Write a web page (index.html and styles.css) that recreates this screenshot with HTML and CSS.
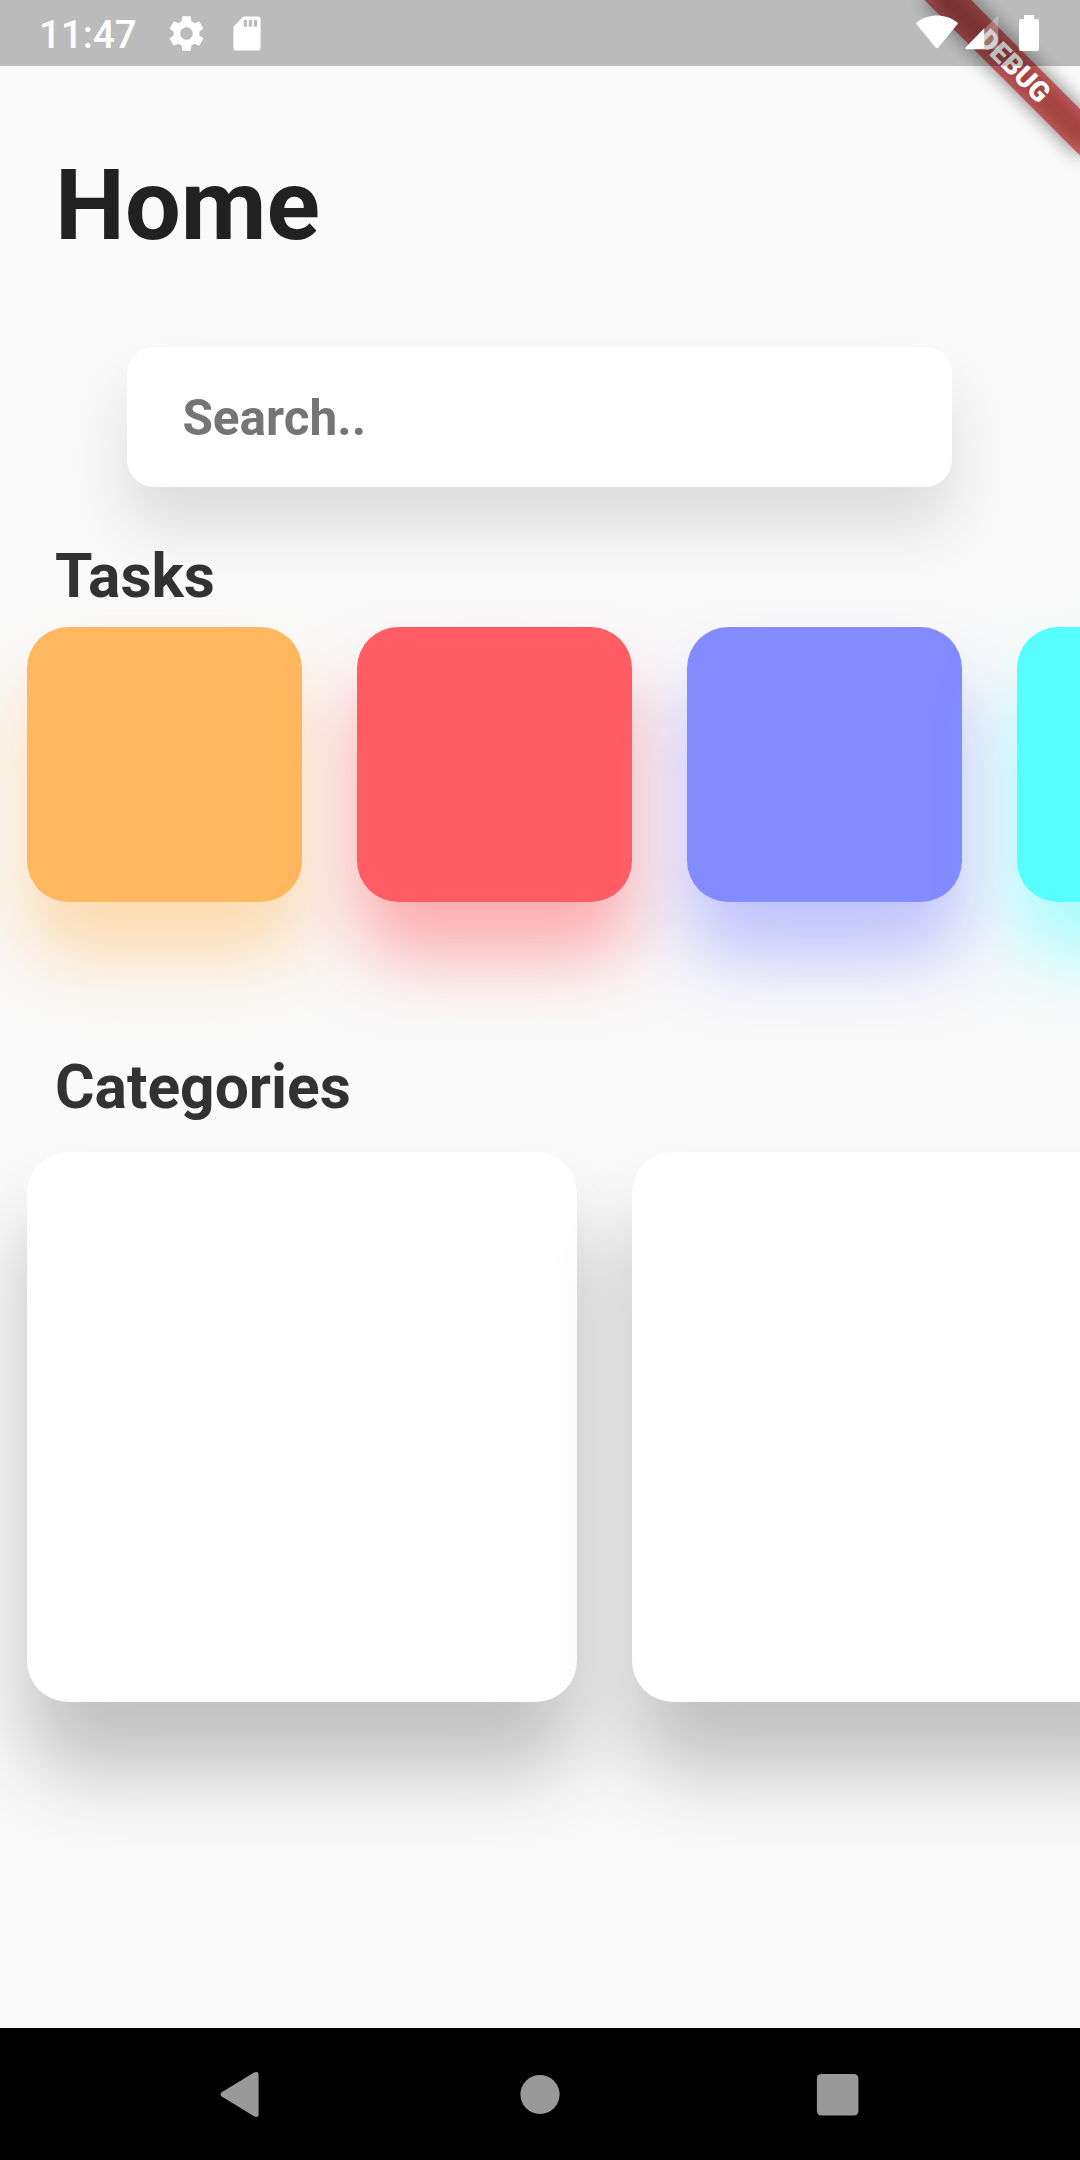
FILE: index.html
```html
<!DOCTYPE html>
<html lang="en">
<head>
<meta charset="utf-8">
<title>Home</title>
<link rel="stylesheet" href="styles.css">
</head>
<body>
<div class="screen">
  <div class="banner">
    <div class="banner-shadow"></div>
    <div class="banner-strip">DEBUG</div>
  </div>
  <header class="status-bar">
    <span class="clock">11:47</span>
    <svg class="gear" viewBox="0 0 24 24"><path fill="#fff" fill-rule="evenodd" d="M19.14 12.94c.04-.3.06-.61.06-.94 0-.32-.02-.64-.07-.94l2.03-1.58c.18-.14.23-.41.12-.61l-1.92-3.32c-.12-.22-.37-.29-.59-.22l-2.39.96c-.5-.38-1.03-.7-1.62-.94L14.4 2.81c-.04-.24-.24-.41-.48-.41h-3.84c-.24 0-.43.17-.47.41L9.25 5.35C8.66 5.59 8.12 5.92 7.63 6.29L5.24 5.33c-.22-.08-.47 0-.59.22L2.74 8.87c-.12.21-.08.47.12.61l2.03 1.58c-.05.3-.09.63-.09.94s.02.64.07.94l-2.03 1.58c-.18.14-.23.41-.12.61l1.92 3.32c.12.22.37.29.59.22l2.39-.96c.5.38 1.03.7 1.62.94l.36 2.54c.05.24.24.41.48.41h3.84c.24 0 .44-.17.47-.41l.36-2.54c.59-.24 1.13-.56 1.62-.94l2.39.96c.22.08.47 0 .59-.22l1.92-3.32c.12-.22.07-.47-.12-.61zM12 15.5a3.5 3.5 0 1 1 0-7 3.5 3.5 0 0 1 0 7z"/></svg>
    <svg class="sd" viewBox="0 0 28 35"><path fill="#fff" fill-rule="evenodd" d="M10.400 .4H24.500Q27.600 .4 27.600 3.500V31.500Q27.600 34.600 24.500 34.600H3.500Q.4 34.600 .4 31.500V10.700ZM10.700 4V10.700H14V4ZM15.800 4V10.700H19V4ZM20.900 4V10.700H24.200V4Z"/></svg>
    <span class="spacer"></span>
    <svg class="wifi" viewBox="0 0 42 34"><path fill="#fff" d="M.6 9.300Q-.3 8.100 1 7.200C7 2.500 14 .4 21 .4S35 2.500 41 7.200Q42.300 8.100 41.400 9.300L22.500 32.300Q21 34 19.500 32.300Z"/></svg>
    <svg class="signal" viewBox="0 0 34 34"><path fill="#fff" fill-opacity=".3" d="M19.300 13.300L31 1.200Q33.300-.4 33.300 2V31Q33.300 33.300 31 33.300H19.300Z"/><path fill="#fff" d="M19.300 12.300V33.300H1.500Q-.5 33 .8 31.200Z"/></svg>
    <svg class="battery" viewBox="0 0 20 36"><path fill="#fff" d="M5 0H15V4H18Q20 4 20 6V34Q20 36 18 36H2Q0 36 0 34V6Q0 4 2 4H5Z"/></svg>
  </header>
  <main class="content">
    <h1 class="title">Home</h1>
    <div class="search">Search..</div>
    <h2 class="heading heading-tasks">Tasks</h2>
    <div class="row">
      <div class="task task-orange"></div>
      <div class="task task-red"></div>
      <div class="task task-indigo"></div>
      <div class="task task-cyan"></div>
    </div>
    <h2 class="heading heading-categories">Categories</h2>
    <div class="row">
      <div class="category"></div>
      <div class="category"></div>
    </div>
  </main>
  <nav class="nav-bar">
    <svg class="nav-icon" viewBox="0 0 48 48"><path fill="#999" d="M5.700 22.200Q3.500 24.500 5.700 26.600L38 46.300Q42.600 48.300 42.600 44V5Q42.600 .5 38 2.500Z"/></svg>
    <svg class="nav-icon" viewBox="0 0 48 48"><circle cx="25" cy="24.500" r="19.600" fill="#999"/></svg>
    <svg class="nav-icon" viewBox="0 0 48 48"><rect x="2.900" y="4" width="41.500" height="41.500" rx="4.500" fill="#999"/></svg>
  </nav>
</div>
</body>
</html>
```
FILE: styles.css
```css
body {
  margin: 0;
  font-family: Roboto, "Liberation Sans", sans-serif;
}

.screen {
  position: relative;
  display: flex;
  flex-direction: column;
  width: 1080px;
  height: 2160px;
  overflow: hidden;
  background: #fafafa;
}

.status-bar {
  position: relative;
  display: flex;
  align-items: center;
  flex: none;
  box-sizing: border-box;
  height: 66px;
  padding: 0 41px 0 39px;
  background: rgba(0, 0, 0, 0.25);
}

.clock {
  width: 126px;
  font-size: 38.5px;
  font-weight: 500;
  line-height: 46px;
  padding-top: 3px;
  color: #fff;
}

.gear {
  width: 43px;
  height: 43px;
}

.sd {
  width: 28px;
  height: 35px;
  margin-left: 25px;
}

.spacer {
  flex: 1;
}

.wifi {
  width: 42px;
  height: 34px;
  margin-bottom: 2px;
}

.signal {
  width: 34px;
  height: 34px;
  margin-left: 7px;
}

.battery {
  width: 20px;
  height: 36px;
  margin-left: 20px;
}

/* Corner ribbon, pivoting on the top right corner of the screen */
.banner {
  position: absolute;
  top: 0;
  left: 1080px;
  width: 0;
  height: 0;
  transform: rotate(45deg);
}

.banner-shadow,
.banner-strip {
  position: absolute;
  top: 77px;
  left: -110px;
  width: 220px;
  height: 33px;
}

.banner-shadow {
  background: rgba(0, 0, 0, 0.5);
  filter: blur(10px);
}

.banner-strip {
  background: rgba(183, 28, 28, 0.63);
  color: #fff;
  font-size: 28px;
  font-weight: 900;
  line-height: 33px;
  text-align: center;
}

.content {
  flex: 1;
  min-height: 0;
  overflow: hidden;
}

.title {
  margin: 81px 0 0 55px;
  font-size: 99px;
  font-weight: 700;
  line-height: 116px;
  color: #212121;
}

.search {
  box-sizing: border-box;
  width: 825px;
  height: 140px;
  margin: 83.5px 0 0 127.4px;
  padding: 42px 55px 0;
  border-radius: 27.5px;
  background: #fff;
  box-shadow: 0 41px 62px rgba(0, 0, 0, 0.122);
  font-size: 49.5px;
  font-weight: 700;
  line-height: 58px;
  color: #757575;
}

.heading {
  margin: 0 0 0 55px;
  font-size: 60.5px;
  font-weight: 700;
  line-height: 71px;
  color: #323232;
}

.heading-tasks {
  margin-top: 54.5px;
  margin-bottom: 14.5px;
}

.heading-categories {
  margin-top: 150.5px;
  margin-bottom: 29.4px;
}

.row {
  display: flex;
  gap: 55px;
  padding-left: 27.4px;
}

.task,
.category {
  flex: none;
  border-radius: 41.25px;
}

.task {
  width: 275px;
  height: 275px;
}

.task-orange {
  background: #ffb85f;
  box-shadow: 0 55px 72px rgba(255, 184, 95, 0.48);
}

.task-red {
  background: #ff5d63;
  box-shadow: 0 55px 72px rgba(255, 93, 99, 0.5);
}

.task-indigo {
  background: #848aff;
  box-shadow: 0 55px 72px rgba(132, 138, 255, 0.5);
}

.task-cyan {
  background: #57ffff;
  box-shadow: 0 55px 72px rgba(87, 255, 255, 0.5);
}

.category {
  width: 550px;
  height: 550px;
  background: #fff;
  box-shadow: 0 68px 82px rgba(0, 0, 0, 0.235);
}

.nav-bar {
  display: flex;
  align-items: center;
  justify-content: space-between;
  flex: none;
  box-sizing: border-box;
  height: 132px;
  padding: 0 218px 0 216px;
  background: #000;
}

.nav-icon {
  width: 48px;
  height: 48px;
}
```
